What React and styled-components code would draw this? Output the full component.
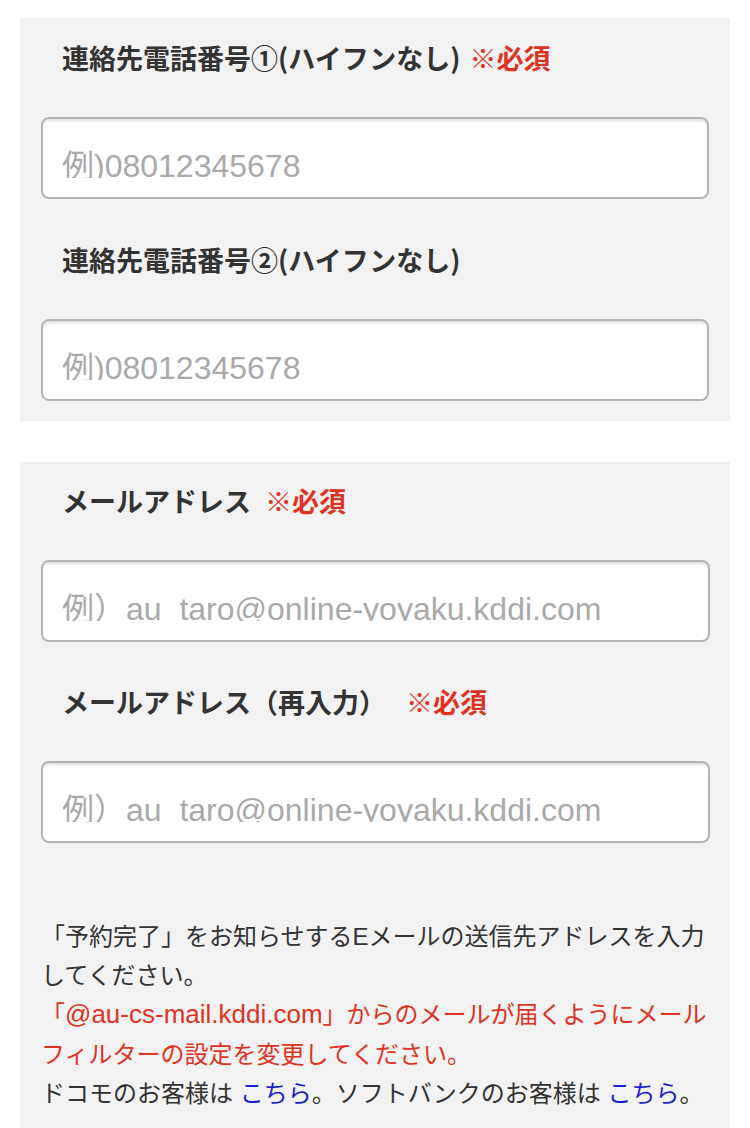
import React from "react";
import styled, { createGlobalStyle } from "styled-components";

const GlobalStyle = createGlobalStyle`
  body {
    margin: 0;
    background: #ffffff;
    font-family: "Noto Sans CJK JP", "Liberation Sans", sans-serif;
    color: #333333;
  }
`;

const Page = styled.div`
  width: 750px;
  padding: 18px 20px 0;
  box-sizing: border-box;
  display: flex;
  flex-direction: column;
  gap: 41px;
`;

const Panel = styled.section`
  background: #f2f2f2;
  padding: ${(props) => props.pad || "20px 21px 20px 21px"};
  display: flex;
  flex-direction: column;
`;

const Label = styled.div`
  padding-left: 21px;
  height: 40px;
  line-height: 40px;
  font-size: 27px;
  font-weight: 700;
  color: #333333;
  white-space: nowrap;
  margin-bottom: 39px;
`;

const Required = styled.span`
  color: #dd3322;
  margin-left: ${(props) => props.gap || 12}px;
`;

const Field = styled.div`
  height: 82px;
  box-sizing: border-box;
  background: #ffffff;
  border: 2px solid #b4b4b4;
  border-radius: 8px;
  box-shadow: inset 0 3px 3px -1px rgba(0, 0, 0, 0.13);
  padding: 27px 19px 0;
  margin-bottom: ${(props) => props.after || 0}px;
`;

const Placeholder = styled.span`
  display: block;
  height: 32px;
  overflow: hidden;
  font-family: "Liberation Sans", "Noto Sans CJK JP", sans-serif;
  font-size: 32px;
  line-height: 40px;
  color: #a9a9a9;
  white-space: nowrap;
`;

const Notes = styled.div`
  margin-top: 74px;
  font-family: "Liberation Sans", "Noto Sans CJK JP", sans-serif;
  font-size: 24px;
  line-height: 39.2px;
  color: #333333;
  white-space: nowrap;
`;

const Warn = styled.span`
  color: #dd3322;
`;

const Address = styled.span`
  font-size: 26px;
`;

const Link = styled.a`
  color: #1a1ecc;
  text-decoration: none;
`;

export default function App() {
  return (
    <>
      <GlobalStyle />
      <Page>
        <Panel>
          <Label>
            連絡先電話番号①(ハイフンなし)<Required gap={9}>※必須</Required>
          </Label>
          <Field after={41}>
            <Placeholder>例)08012345678</Placeholder>
          </Field>
          <Label>連絡先電話番号②(ハイフンなし)</Label>
          <Field>
            <Placeholder>例)08012345678</Placeholder>
          </Field>
        </Panel>
        <Panel pad="19px 20px 15px 21px">
          <Label>
            メールアドレス<Required gap={14}>※必須</Required>
          </Label>
          <Field after={40}>
            <Placeholder>例）au_taro@online-yoyaku.kddi.com</Placeholder>
          </Field>
          <Label>
            メールアドレス（再入力）<Required gap={20}>※必須</Required>
          </Label>
          <Field>
            <Placeholder>例）au_taro@online-yoyaku.kddi.com</Placeholder>
          </Field>
          <Notes>
            「予約完了」をお知らせするEメールの送信先アドレスを入力
            <br />
            してください。
            <br />
            <Warn>
              「<Address>@au-cs-mail.kddi.com</Address>」からのメールが届くようにメール
              <br />
              フィルターの設定を変更してください。
            </Warn>
            <br />
            ドコモのお客様は <Link href="#">こちら</Link>。ソフトバンクのお客様は{" "}
            <Link href="#">こちら</Link>。
          </Notes>
        </Panel>
      </Page>
    </>
  );
}
